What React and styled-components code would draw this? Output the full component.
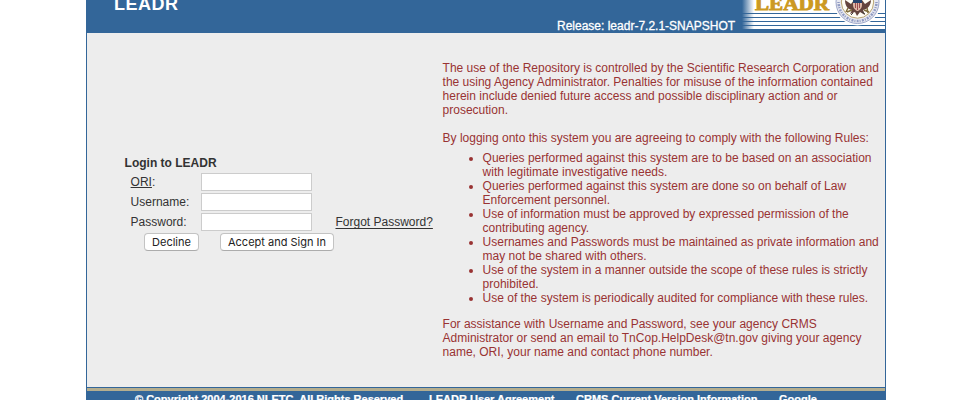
import React from "react";
import styled, { createGlobalStyle } from "styled-components";

const GlobalStyle = createGlobalStyle`
  body {
    margin: 0;
    background: #fff;
    font: 12px/14px "Liberation Sans", Arial, sans-serif;
    color: #333;
    overflow: hidden;
  }
`;

const Frame = styled.div`
  box-sizing: border-box;
  width: 800px;
  height: 400px;
  margin-left: 86px;
  border: solid #336699;
  border-width: 0 1px;
  background: #ededed;
  display: flex;
  flex-direction: column;
  overflow: hidden;
`;

const Header = styled.header`
  height: 33px;
  flex: none;
  display: flex;
  background: #336699;
  color: #fff;
`;

const Title = styled.h1`
  margin: -6px 0 0 27px;
  width: 443px;
  font-size: 18px;
  line-height: 20px;
  letter-spacing: 0.5px;
`;

const Release = styled.div`
  margin-top: 19px;
  width: 185px;
  white-space: nowrap;
  -webkit-text-stroke: 0.3px #fff;
`;

const Emblem = styled.svg`
  display: block;
  flex: none;
`;

const Main = styled.main`
  height: 354px;
  flex: none;
  display: flex;
`;

const LoginPanel = styled.form`
  box-sizing: border-box;
  width: 355.6px;
  flex: none;
  padding: 123px 0 0 37.6px;
`;

const LoginTitle = styled.h2`
  margin: 0 0 1px;
  font-size: 12px;
  line-height: 15px;
`;

const Field = styled.div`
  height: 20px;
  padding-left: 6px;
  display: grid;
  grid-template-columns: 70.4px 111px auto;
  align-items: center;
`;

const Label = styled.label`
  line-height: 18px;
`;

const Input = styled.input`
  box-sizing: border-box;
  width: 111px;
  height: 18px;
  margin: 0;
  border: 1px solid #ccc;
  background: #fff;
`;

const Forgot = styled.a`
  margin-left: 23.5px;
  text-decoration: underline;
  text-underline-offset: 2px;
  white-space: nowrap;
`;

const Actions = styled.div`
  display: flex;
  gap: 21px;
  padding: 1px 0 0 19.4px;
`;

const Button = styled.button`
  box-sizing: border-box;
  width: ${(p) => p.$width}px;
  height: 18px;
  padding: 0;
  border: 1px solid #c3c3c3;
  border-bottom-color: #acacac;
  border-radius: 4px;
  background: #fff;
  color: #222;
  font: 11px/15px Inter, sans-serif;
  white-space: nowrap;
`;

const Notice = styled.section`
  padding: 28px 0 0 0;
  color: #993333;
  white-space: nowrap;
`;

const Paragraph = styled.p`
  margin: 0 0 14px;
`;

const Rules = styled.ul`
  margin: -8px 0 12px;
  padding: 0;
  list-style: none;
`;

const Rule = styled.li`
  display: grid;
  grid-template-columns: 40px auto;
`;

const Bullet = styled.span`
  width: 4px;
  height: 4px;
  border-radius: 50%;
  background: #993333;
  margin: 6px 0 0 26.4px;
`;

const Line = styled.span`
  display: block;
`;

const Footer = styled.footer`
  height: 13px;
  flex: none;
  box-sizing: border-box;
  border-top: 1px solid #336699;
  background: #336699;
`;

const Accent = styled.div`
  height: 3px;
  background: #b5ae8f;
`;

const Links = styled.nav`
  display: flex;
  padding: 1px 0 0 48px;
  gap: 24px;
  color: #fff;
  font-size: 11px;
  line-height: 14px;
  font-weight: bold;
  white-space: nowrap;
  -webkit-text-stroke: 0.25px #fff;
`;

const FooterLink = styled.a`
  width: ${(p) => p.$width}px;
`;

const rules = [
  ["Queries performed against this system are to be based on an association", "with legitimate investigative needs."],
  ["Queries performed against this system are done so on behalf of Law", "Enforcement personnel."],
  ["Use of information must be approved by expressed permission of the", "contributing agency."],
  ["Usernames and Passwords must be maintained as private information and", "may not be shared with others."],
  ["Use of the system in a manner outside the scope of these rules is strictly", "prohibited."],
  ["Use of the system is periodically audited for compliance with these rules."],
];

const Lines = ({ text }) => text.map((line) => <Line key={line}>{line}</Line>);

function Brand() {
  return (
    <Emblem width="143" height="33" viewBox="742 0 143 33">
      <defs>
        <linearGradient id="fade" x1="0" x2="1">
          <stop offset="0" stopColor="#336699" />
          <stop offset="1" stopColor="#336699" stopOpacity="0" />
        </linearGradient>
      </defs>
      <path fill="#fff" d="M742 0h143v29H742z" />
      <path fill="#336699" d="M742 13h143v1H742zM742 17h143v1H742zM742 21h143v1H742zM742 25h143v1H742z" />
      <path fill="url(#fade)" d="M742 0h12v29h-12z" />
      <text x="755" y="10" textLength="74" lengthAdjust="spacingAndGlyphs" fill="#cc9922" stroke="#cc9922" strokeWidth=".9" fontFamily="Liberation Serif" fontSize="19" fontWeight="bold">LEADR</text>
      <circle cx="857.5" cy="2" r="23.5" fill="#fff" />
      <circle cx="857.5" cy="2" r="21.5" fill="#e8e9f1" stroke="#9da7ca" strokeWidth="1" />
      <path d="M838.500 2A19 19 0 0 0 876.500 2" fill="none" stroke="#8f9ac2" strokeWidth="2.500" strokeDasharray="1 1.300 2 1" />
      <circle cx="857.5" cy="2" r="16.2" fill="#fffdf4" stroke="#b9a572" strokeWidth="1" />
      <path fill="#65453e" d="M845 0c0 5 2 9 7 10l-2 4 5-2 2 4 3-4 5 3-2-5c5-1 8-5 8-10l-6 4-3-4h-8l-3 4z" />
      <path fill="#dfb8a6" d="M853 0h9v5c0 4-4 6-4.500 6s-4.500-2-4.500-6z" />
      <path stroke="#9d4c50" d="M855.500 3v5M857.500 3v7M859.500 3v5" />
      <path fill="#28446d" d="M853 0h9v3h-9z" />
      <path fill="none" stroke="#806d3d" strokeWidth="1.500" d="M852 10l-5 2M848 8l-2 4M864 10l5 2M867 8l1 5" />
      <path fill="none" stroke="#46443d" strokeWidth="1" d="M853 13l-2 2M862 12l3 2" />
    </Emblem>
  );
}

export default function App() {
  return (
    <>
      <GlobalStyle />
      <Frame>
        <Header>
          <Title>LEADR</Title>
          <Release>Release: leadr-7.2.1-SNAPSHOT</Release>
          <Brand />
        </Header>
        <Main>
          <LoginPanel>
            <LoginTitle>Login to LEADR</LoginTitle>
            <Field><Label htmlFor="ori"><u>ORI</u>:</Label><Input id="ori" /></Field>
            <Field><Label htmlFor="username">Username:</Label><Input id="username" /></Field>
            <Field><Label htmlFor="password">Password:</Label><Input id="password" type="password" /><Forgot>Forgot Password?</Forgot></Field>
            <Actions>
              <Button type="button" $width={55}>Decline</Button>
              <Button type="button" $width={114}>Accept and Sign In</Button>
            </Actions>
          </LoginPanel>
          <Notice>
            <Paragraph>
              <Lines text={[
                "The use of the Repository is controlled by the Scientific Research Corporation and",
                "the using Agency Administrator. Penalties for misuse of the information contained",
                "herein include denied future access and possible disciplinary action and or",
                "prosecution.",
              ]} />
            </Paragraph>
            <Paragraph>By logging onto this system you are agreeing to comply with the following Rules:</Paragraph>
            <Rules>
              {rules.map((rule) => (
                <Rule key={rule[0]}><Bullet /><div><Lines text={rule} /></div></Rule>
              ))}
            </Rules>
            <Paragraph>
              <Lines text={[
                "For assistance with Username and Password, see your agency CRMS",
                "Administrator or send an email to TnCop.HelpDesk@tn.gov giving your agency",
                "name, ORI, your name and contact phone number.",
              ]} />
            </Paragraph>
          </Notice>
        </Main>
        <Footer>
          <Accent />
          <Links>
            <FooterLink $width={270}>© Copyright 2004-2016 NLETC. All Rights Reserved</FooterLink>
            <FooterLink $width={123}>LEADR User Agreement</FooterLink>
            <FooterLink $width={179}>CRMS Current Version Information</FooterLink>
            <FooterLink $width={40}>Google</FooterLink>
          </Links>
        </Footer>
      </Frame>
    </>
  );
}
